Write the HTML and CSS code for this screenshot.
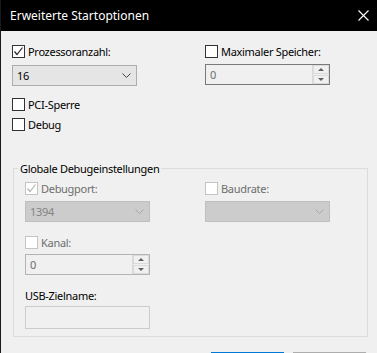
FILE: index.html
```html
<!DOCTYPE html>
<html lang="de">
<head>
    <meta charset="UTF-8">
    <title>Erweiterte Startoptionen</title>
    <link rel="stylesheet" href="styles.css">
</head>
<body>
    <div class="window">
        <div class="titlebar">
            <span class="title">Erweiterte Startoptionen</span>
            <svg class="close" width="11" height="11" viewBox="0 0 11 11">
                <path d="M0.5 0.5 L10.5 10.5 M10.5 0.5 L0.5 10.5" stroke="#fff" stroke-width="1.1" fill="none"/>
            </svg>
        </div>

        <div class="content">
            <div class="cols top">
                <div class="col">
                    <label class="check">
                        <span class="box checked">
                            <svg width="11" height="11" viewBox="0 0 11 11"><path d="M1.5 5.5 L4 8.5 L9.5 1.5" stroke="#222" stroke-width="1.2" fill="none"/></svg>
                        </span>
                        Prozessoranzahl:
                    </label>
                    <div class="combo">
                        <span>16</span>
                        <svg class="chev" width="9" height="5" viewBox="0 0 9 5"><path d="M0.5 0.5 L4.5 4.5 L8.5 0.5" stroke="#444" fill="none"/></svg>
                    </div>
                </div>
                <div class="col">
                    <label class="check">
                        <span class="box"></span>
                        Maximaler Speicher:
                    </label>
                    <div class="spin">
                        <span class="val">0</span>
                        <div class="spin-btns">
                            <span class="arrow up"></span>
                            <span class="arrow down"></span>
                        </div>
                    </div>
                </div>
            </div>

            <label class="check pci"><span class="box"></span>PCI-Sperre</label>
            <label class="check debug"><span class="box"></span>Debug</label>

            <fieldset class="group">
                <legend>Globale Debugeinstellungen</legend>
                <div class="cols inner">
                    <div class="col">
                        <label class="check disabled">
                            <span class="box checked">
                                <svg width="11" height="11" viewBox="0 0 11 11"><path d="M1.5 5.5 L4 8.5 L9.5 1.5" stroke="#b5b5b5" stroke-width="1.2" fill="none"/></svg>
                            </span>
                            Debugport:
                        </label>
                        <div class="combo off">
                            <span>1394</span>
                            <svg class="chev" width="9" height="5" viewBox="0 0 9 5"><path d="M0.5 0.5 L4.5 4.5 L8.5 0.5" stroke="#a8a8a8" fill="none"/></svg>
                        </div>
                    </div>
                    <div class="col">
                        <label class="check disabled"><span class="box"></span>Baudrate:</label>
                        <div class="combo off">
                            <span></span>
                            <svg class="chev" width="9" height="5" viewBox="0 0 9 5"><path d="M0.5 0.5 L4.5 4.5 L8.5 0.5" stroke="#a8a8a8" fill="none"/></svg>
                        </div>
                    </div>
                </div>

                <label class="check disabled kanal"><span class="box"></span>Kanal:</label>
                <div class="spin light">
                    <span class="val">0</span>
                    <div class="spin-btns">
                        <span class="arrow up"></span>
                        <span class="arrow down"></span>
                    </div>
                </div>

                <div class="field-label">USB-Zielname:</div>
                <div class="textbox"></div>
            </fieldset>

            <div class="buttons">
                <button class="btn default"></button>
                <button class="btn"></button>
            </div>
        </div>
    </div>
</body>
</html>
```

FILE: styles.css
```css
body {
    margin: 0;
    background: #f0f0f0;
    font-family: "Noto Sans", sans-serif;
    font-size: 11px;
    letter-spacing: -0.3px;
    color: #000;
}
.window {
    width: 376px;
    height: 353px;
    overflow: hidden;
    background: #f0f0f0;
    border-left: 1px solid #1a1a1a;
}
.titlebar {
    height: 31px;
    background: #000;
    color: #fff;
    display: flex;
    align-items: center;
    justify-content: space-between;
    padding: 0 8px 0 9px;
}
.title {
    font-size: 12px;
    letter-spacing: 0;
    margin-top: -1px;
}
.close {
    margin-top: -1px;
}
.content {
    padding: 13px 0 0 11px;
}
.cols {
    display: grid;
    grid-template-columns: 125px 125px;
    column-gap: 68px;
}
.cols.inner {
    column-gap: 55px;
}
.col {
    display: flex;
    flex-direction: column;
}
.check {
    display: flex;
    align-items: center;
    height: 15px;
    line-height: 15px;
    gap: 3px;
    white-space: nowrap;
}
.check.disabled {
    color: #6d6d6d;
}
.box {
    width: 13px;
    height: 13px;
    box-sizing: border-box;
    border: 1px solid #333;
    background: #fff;
    display: flex;
    align-items: center;
    justify-content: center;
    flex-shrink: 0;
}
.disabled .box {
    border-color: #c4c4c4;
}
.combo {
    margin-top: 6px;
    height: 21px;
    box-sizing: border-box;
    border: 1px solid #adadad;
    background: #e5e5e5;
    display: flex;
    align-items: center;
    justify-content: space-between;
    padding: 0 5px 0 4px;
}
.combo.off {
    margin-top: 5px;
    background: #cccccc;
    border-color: #bfbfbf;
    color: #838383;
}
.spin {
    margin-top: 5px;
    height: 21px;
    width: 125px;
    box-sizing: border-box;
    border: 1px solid #7a7a7a;
    display: flex;
    align-items: center;
    justify-content: space-between;
    padding-left: 4px;
    color: #6d6d6d;
}
.spin.light {
    border-color: #b4b4b4;
    margin-top: 4px;
}
.spin-btns {
    width: 16px;
    height: 19px;
    display: flex;
    flex-direction: column;
    gap: 1px;
    border-left: 1px solid #d9d9d9;
}
.spin-btns .arrow {
    flex: 1;
    border: 1px solid #dadada;
    display: flex;
    align-items: center;
    justify-content: center;
}
.arrow::after {
    content: "";
    border-left: 3px solid transparent;
    border-right: 3px solid transparent;
}
.arrow.up::after {
    border-bottom: 3px solid #606060;
}
.arrow.down::after {
    border-top: 3px solid #606060;
}
.pci {
    margin-top: 11px;
}
.debug {
    margin-top: 5px;
}
.group {
    margin: 29px 0 0 1px;
    width: 355px;
    box-sizing: border-box;
    border: 1px solid #dcdcdc;
    padding: 5px 11px 7px 11px;
}
.group legend {
    padding: 0 2px;
    margin-left: -7px;
    line-height: 15px;
}
.kanal {
    margin-top: 13px;
}
.field-label {
    margin-top: 13px;
    line-height: 15px;
}
.textbox {
    margin-top: 3px;
    width: 125px;
    height: 23px;
    box-sizing: border-box;
    border: 1px solid #cccccc;
    background: #f0f0f0;
}
.buttons {
    display: flex;
    gap: 9px;
    margin: 15px 0 0 199px;
}
.btn {
    width: 73px;
    height: 23px;
    box-sizing: border-box;
    border: 1px solid #adadad;
    background: #e1e1e1;
    font-family: inherit;
    font-size: 12px;
    padding: 0;
}
.btn.default {
    border: 2px solid #0078d7;
}
```
